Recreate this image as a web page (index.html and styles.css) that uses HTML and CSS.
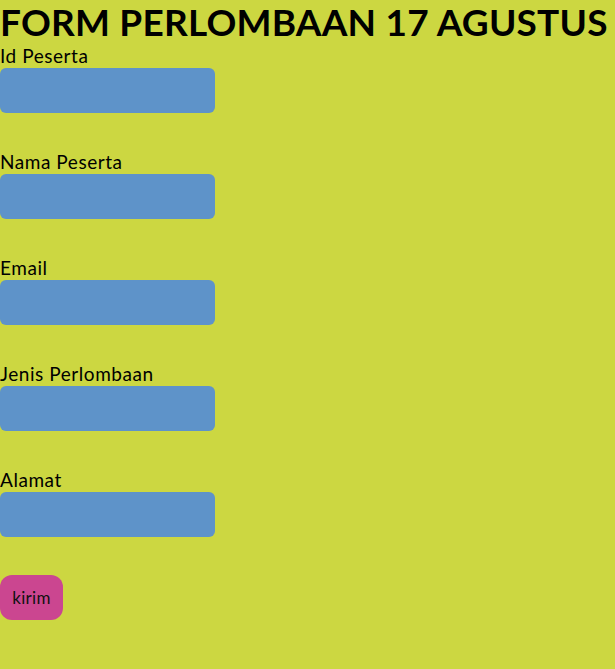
FILE: index.html
```html
<!DOCTYPE html>
<html lang="id">
<head>
<meta charset="utf-8">
<title>Form Perlombaan 17 Agustus</title>
<link rel="stylesheet" href="styles.css">
</head>
<body>
<h1 class="title">FORM PERLOMBAAN 17 AGUSTUS</h1>
<form class="form">
  <div class="field">
    <label class="label" for="id">Id Peserta</label>
    <input class="input" id="id" type="text">
  </div>
  <div class="field">
    <label class="label" for="nama">Nama Peserta</label>
    <input class="input" id="nama" type="text">
  </div>
  <div class="field">
    <label class="label" for="email">Email</label>
    <input class="input" id="email" type="text">
  </div>
  <div class="field">
    <label class="label" for="jenis">Jenis Perlombaan</label>
    <input class="input" id="jenis" type="text">
  </div>
  <div class="field">
    <label class="label" for="alamat">Alamat</label>
    <input class="input" id="alamat" type="text">
  </div>
  <button class="button" type="button">kirim</button>
</form>
</body>
</html>
```
FILE: styles.css
```css
html, body {
  margin: 0;
  padding: 0;
  background: #ccd741;
  font-family: Lato, sans-serif;
  color: #000;
}
body {
  height: 669px;
  overflow: hidden;
}
.title {
  margin: 0;
  height: 48px;
  font-size: 37px;
  line-height: 44px;
  font-weight: bold;
  letter-spacing: 0.2px;
  white-space: nowrap;
}
.form {
  display: flex;
  flex-direction: column;
  align-items: flex-start;
  gap: 41px;
}
.field {
  display: flex;
  flex-direction: column;
  align-items: flex-start;
}
.label {
  display: block;
  font-size: 19px;
  line-height: 16px;
  height: 20px;
  letter-spacing: 0.55px;
}
.input {
  box-sizing: border-box;
  width: 215px;
  height: 45px;
  border: none;
  border-radius: 6px;
  background: #5e93c9;
  margin: 0;
  padding: 0;
}
.button {
  box-sizing: border-box;
  margin-top: -3px;
  width: 63px;
  height: 45px;
  border: none;
  border-radius: 12px;
  background: #cb4690;
  font-family: Lato, sans-serif;
  font-size: 17px;
  letter-spacing: 0.3px;
  color: #111;
  padding: 0;
}
```
